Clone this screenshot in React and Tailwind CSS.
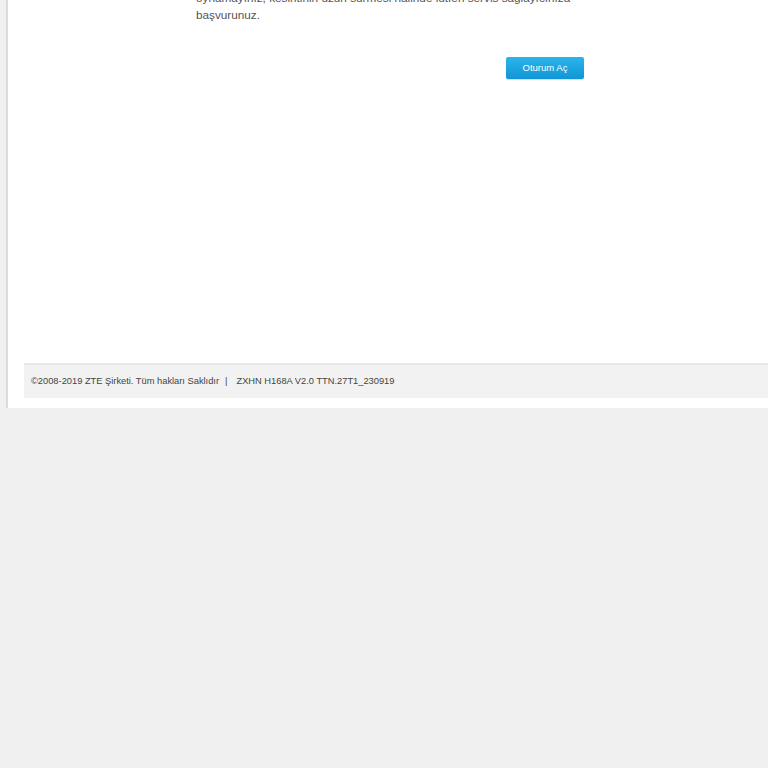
export default function App() {
  return (
    <div className="min-h-[768px] bg-[#f0f0f0] font-['Liberation_Sans',Arial,sans-serif] overflow-hidden">
      <div className="ml-[6px] h-[408px] bg-white border-l-2 border-[#dcdcdc] flex flex-col">
        {/* Message */}
        <div className="mt-[-10px] pl-[188px] w-[600px] text-[11.75px] leading-[16.5px] text-[#555]">
          <p>
            oynamayınız, kesintinin uzun sürmesi halinde lütfen servis sağlayıcınıza
            <br />
            başvurunuz.
          </p>
        </div>

        <div className="flex justify-start pl-[498px] mt-[34px]">
          <button className="w-[78px] h-[22px] rounded-[2px] bg-gradient-to-b from-[#2ab4ec] to-[#1195d6] text-white text-[9.5px] shadow-[0_1px_1px_rgba(0,0,0,0.15)]">
            Oturum Aç
          </button>
        </div>

        {/* Footer */}
        <div className="mt-auto mb-[10px] ml-[16px] h-[35px] bg-[#f2f2f2] border-t-2 border-[#e8e8e8] flex items-center pl-[7px] pt-[1px] text-[9.3px] text-[#444]">
          <span>©2008-2019 ZTE Şirketi. Tüm hakları Saklıdır</span>
          <span className="mx-[6px]">|</span>
          <span className="ml-[3px]">ZXHN H168A V2.0 TTN.27T1_230919</span>
        </div>
      </div>
    </div>
  );
}
